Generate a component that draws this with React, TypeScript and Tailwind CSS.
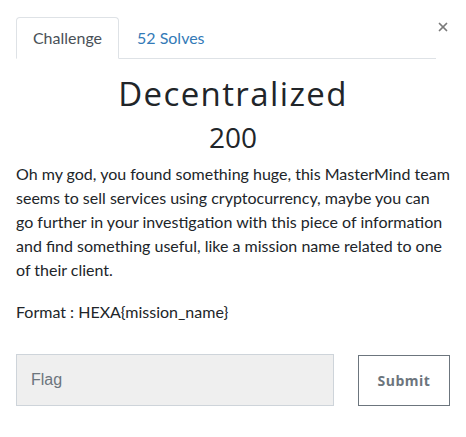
import { X } from "lucide-react";

export default function App() {
  return (
    <div className="w-[466px] h-[437px] bg-white font-['Lato','Noto_Sans',sans-serif] text-[#212529]">
      <div className="px-4 pt-[17px]">
        <div className="flex items-end">
          <div className="flex flex-1 border-b border-[#dee2e6] h-[42px]">
            <div className="w-[103px] h-[42px] border border-[#dee2e6] border-b-white rounded-t-[4px] bg-white flex items-center justify-center text-[16px] text-[#495057] mb-[-1px]">
              Challenge
            </div>
            <div className="px-[18px] flex items-center text-[16px] text-[#337ab7]">
              52 Solves
            </div>
          </div>
          <button className="mb-[22px] w-[14px] h-[20px] flex items-center justify-center text-[#7a7a7a]">
            <X size={16} strokeWidth={3} />
          </button>
        </div>

        <h1 className="mt-[13px] text-center text-[33px] leading-[44px] font-normal tracking-[1.4px] text-[#212529] font-['Open_Sans',sans-serif]">
          Decentralized
        </h1>
        <h2 className="mt-[2px] text-center text-[28px] leading-[38px] font-normal text-[#212529] font-['Open_Sans',sans-serif]">
          200
        </h2>

        <p className="mt-[6px] text-[16px] leading-[24px] text-[#212529]">
          Oh my god, you found something huge, this MasterMind team seems to sell services using cryptocurrency, maybe you can go further in your investigation with this piece of information and find something useful, like a mission name related to one of their client.
        </p>
        <p className="mt-[18px] text-[16px] leading-[24px]">Format : HEXA{"{"}mission_name{"}"}</p>

        <div className="mt-[30px] flex items-center">
          <input
            placeholder="Flag"
            className="w-[318px] h-[52px] bg-[#efefef] border border-[#ced4da] px-[14px] text-[16px] font-['Liberation_Sans',sans-serif] placeholder:text-[#6c757d] outline-none"
          />
          <button className="ml-[24px] w-[92px] h-[51px] border border-[#6c757d] text-[#6c757d] text-[14px] font-bold tracking-[0.5px] font-['Open_Sans',sans-serif]">
            Submit
          </button>
        </div>
      </div>
    </div>
  );
}
